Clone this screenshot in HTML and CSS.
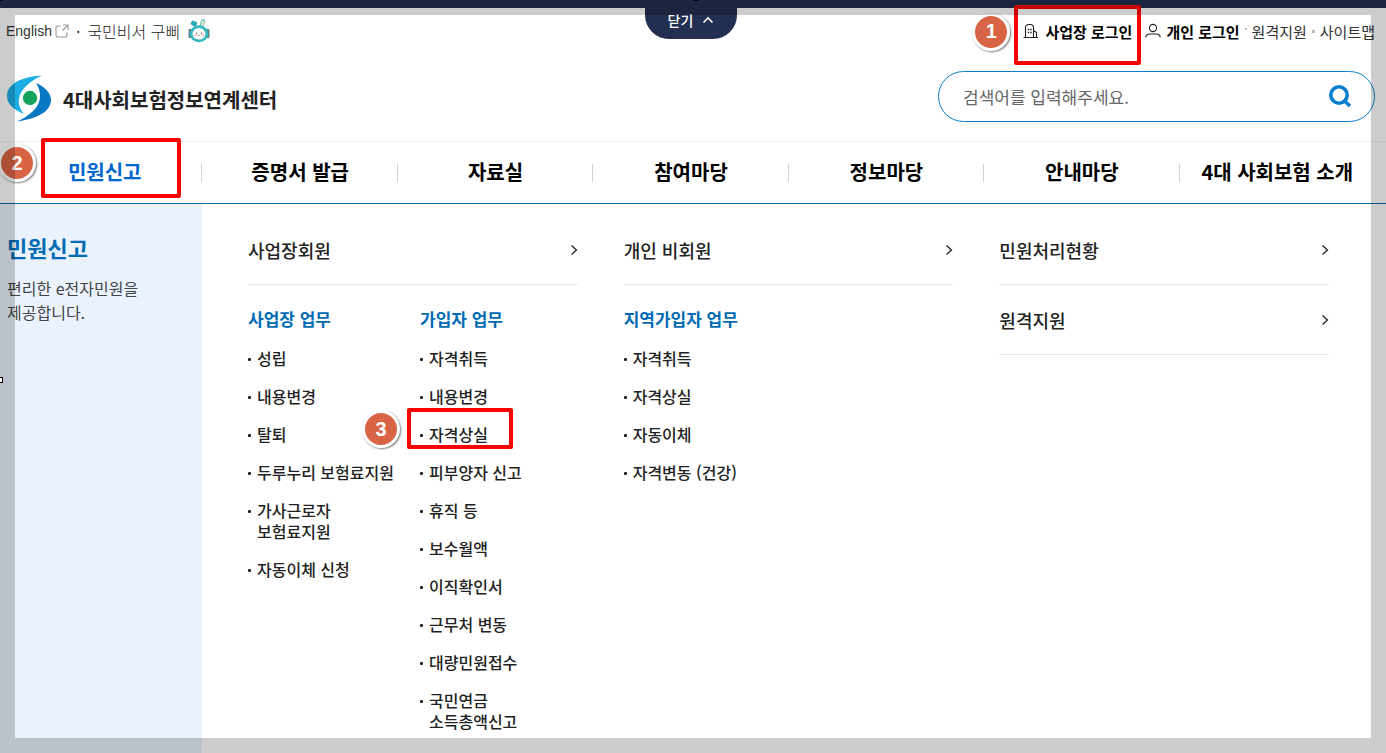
FILE: index.html
```html
<!DOCTYPE html>
<html lang="ko">
<head>
<meta charset="utf-8">
<meta name="viewport" content="width=device-width, initial-scale=1">
<title>4대사회보험정보연계센터</title>
<link rel="stylesheet" href="styles.css">
</head>
<body>
<div class="page">
  <div class="topbar">
    <button class="close-tab" type="button">닫기
      <svg width="12" height="8" viewBox="0 0 12 8" fill="none" stroke="#fff" stroke-width="1.600"><path d="M1.500 6.500 6 2l4.500 4.500"/></svg>
    </button>
  </div>

  <header class="header">
    <div class="utility">
      <div class="utility-group">
        <a class="english" href="#">English
          <svg width="14" height="14" viewBox="0 0 14 14" fill="none" stroke="#999" stroke-width="1.100"><path d="M5.500 2H3a2 2 0 0 0-2 2v7a2 2 0 0 0 2 2h7a2 2 0 0 0 2-2V8.500M8 1h5v5M13 1 7.500 6.500"/></svg>
        </a>
        <span class="dot">·</span>
        <a class="assistant" href="#">국민비서 구삐
          <svg width="22" height="24" viewBox="0 0 22 24">
            <ellipse cx="6" cy="4.500" rx="3.200" ry="2.500" fill="#27a9b1" transform="rotate(25 6 4.500)"/>
            <ellipse cx="14.500" cy="4" rx="2.300" ry="4" fill="#6ecbc3" transform="rotate(20 14.500 4)"/>
            <ellipse cx="14.500" cy="4.300" rx="1.200" ry="2.800" fill="#f4e9b5" transform="rotate(20 14.500 4.300)"/>
            <rect x="0.500" y="10" width="4" height="9" rx="1" fill="#5d8289"/>
            <rect x="17.500" y="10" width="4" height="9" rx="1" fill="#5d8289"/>
            <ellipse cx="11" cy="14.800" rx="9.300" ry="8.500" fill="#35b8bd"/>
            <ellipse cx="11" cy="14.800" rx="6.500" ry="5.800" fill="#fff"/>
            <circle cx="7" cy="16.300" r="1.300" fill="#f8c9c9"/><circle cx="15" cy="16.300" r="1.300" fill="#f8c9c9"/>
            <circle cx="8.500" cy="14.300" r="0.700" fill="#555"/><circle cx="13.500" cy="14.300" r="0.700" fill="#555"/>
            <path d="M9.500 16q.8 1 1.500 0 .7 1 1.500 0" fill="none" stroke="#777" stroke-width=".8"/>
          </svg>
        </a>
      </div>
      <div class="utility-group utility-right">
        <div class="marked login-mark">
          <a class="login" href="#">
            <svg width="16" height="16" viewBox="0 0 16 16" fill="none" stroke="#222" stroke-width="1.100"><path d="M.5 14.500h14.500M2.500 14.500V4.500a3 3 0 0 1 3-3h2a3 3 0 0 1 3 3v10M10.500 7.500l3 2v5"/><path d="M4.800 6.500h1.400M7.300 6.500h1.400M4.800 9.500h1.400M7.300 9.500h1.400" stroke-width="1.400"/></svg>
            사업장 로그인</a>
          <span class="frame frame-login"></span>
          <span class="badge badge-login">1</span>
        </div>
        <a class="login login-personal" href="#">
          <svg width="16" height="16" viewBox="0 0 16 16" fill="none" stroke="#222" stroke-width="1.100"><circle cx="8" cy="5" r="3.600"/><path d="M.8 14.500c0-2.300 2-3.500 4.200-3.500h6c2.200 0 4.200 1.200 4.200 3.500"/></svg>
          개인 로그인</a>
        <span class="square square-high"></span>
        <a href="#">원격지원</a>
        <span class="square"></span>
        <a href="#">사이트맵</a>
      </div>
    </div>
    <div class="brand-row">
      <a class="brand" href="#">
        <svg width="46" height="48" viewBox="0 0 46 48">
          <path d="M36 .5C23 1 1 6 1 21c0 9 8 14 17 18-9-11-8-26 18-38.500Z" fill="#1caee5"/>
          <path d="M30 8c9 4 15 10 15 17 0 12-15 19-34 21.500C28 39 41 26 30 8Z" fill="#0878c2"/>
          <circle cx="24" cy="23" r="7.200" fill="#17a35b"/>
        </svg>
        4대사회보험정보연계센터
      </a>
      <form class="search">
        <input type="text" aria-label="검색어" placeholder="검색어를 입력해주세요.">
        <button type="button" aria-label="검색">
          <svg width="24" height="24" viewBox="0 0 24 24" fill="none" stroke="#087fce" stroke-width="3.600"><circle cx="11" cy="11" r="8.200"/><path d="m16.500 17 5.500 5"/></svg>
        </button>
      </form>
    </div>
  </header>

  <nav class="nav">
    <div class="nav-item marked"><a class="active" href="#">민원신고</a><span class="frame frame-nav"></span><span class="badge badge-nav">2</span></div>
    <div class="nav-item"><a href="#">증명서 발급</a></div>
    <div class="nav-item"><a href="#">자료실</a></div>
    <div class="nav-item"><a href="#">참여마당</a></div>
    <div class="nav-item"><a href="#">정보마당</a></div>
    <div class="nav-item"><a href="#">안내마당</a></div>
    <div class="nav-item"><a href="#">4대 사회보험 소개</a></div>
  </nav>

  <main class="menu">
    <aside class="side">
      <h1>민원신고</h1>
      <p>편리한 e전자민원을<br>제공합니다.</p>
    </aside>
    <div class="columns">
      <section>
        <a class="head" href="#">사업장회원 <svg width="8" height="12" viewBox="0 0 8 12"><path d="m1.500 1.500 5 4.500-5 4.500"/></svg></a>
        <div class="lists">
          <div>
            <h2>사업장 업무</h2>
            <ul>
              <li><a href="#">성립</a></li>
              <li><a href="#">내용변경</a></li>
              <li><a href="#">탈퇴</a></li>
              <li><a href="#">두루누리 보험료지원</a></li>
              <li><a href="#">가사근로자<br>보험료지원</a></li>
              <li><a href="#">자동이체 신청</a></li>
            </ul>
          </div>
          <div>
            <h2>가입자 업무</h2>
            <ul>
              <li><a href="#">자격취득</a></li>
              <li><a href="#">내용변경</a></li>
              <li class="marked"><a href="#">자격상실</a><span class="frame frame-list"></span><span class="badge badge-list">3</span></li>
              <li><a href="#">피부양자 신고</a></li>
              <li><a href="#">휴직 등</a></li>
              <li><a href="#">보수월액</a></li>
              <li><a href="#">이직확인서</a></li>
              <li><a href="#">근무처 변동</a></li>
              <li><a href="#">대량민원접수</a></li>
              <li><a href="#">국민연금<br>소득총액신고</a></li>
            </ul>
          </div>
        </div>
      </section>
      <section>
        <a class="head" href="#">개인 비회원 <svg width="8" height="12" viewBox="0 0 8 12"><path d="m1.500 1.500 5 4.500-5 4.500"/></svg></a>
        <h2>지역가입자 업무</h2>
        <ul>
          <li><a href="#">자격취득</a></li>
          <li><a href="#">자격상실</a></li>
          <li><a href="#">자동이체</a></li>
          <li><a href="#">자격변동 (건강)</a></li>
        </ul>
      </section>
      <section>
        <a class="head" href="#">민원처리현황 <svg width="8" height="12" viewBox="0 0 8 12"><path d="m1.500 1.500 5 4.500-5 4.500"/></svg></a>
        <a class="head" href="#">원격지원 <svg width="8" height="12" viewBox="0 0 8 12"><path d="m1.500 1.500 5 4.500-5 4.500"/></svg></a>
      </section>
    </div>
  </main>
</div>
<div class="shade"></div>
<span class="handle handle-corner"></span>
<span class="handle handle-top"></span>
<span class="handle handle-left"></span>
</body>
</html>
```
FILE: styles.css
```css
* { box-sizing: border-box; }
body {
  margin: 0;
  background: #fff;
  color: #222;
  font-family: "Noto Sans CJK KR", "Noto Sans", sans-serif;
  font-size: 16px;
}
a { color: inherit; text-decoration: none; }
button { border: 0; padding: 0; background: none; font: inherit; cursor: pointer; }
h1, h2, p, ul { margin: 0; padding: 0; }
ul { list-style: none; }
svg { flex: none; }

.page { display: flex; flex-direction: column; min-height: 100vh; }

.topbar { position: relative; height: 8px; background: #222f50; }
.close-tab {
  position: absolute;
  top: 0;
  left: 50%;
  z-index: 2;
  display: flex;
  align-items: center;
  justify-content: center;
  gap: 9px;
  width: 92px;
  height: 39px;
  margin-left: -48px;
  border-radius: 0 0 24px 24px;
  background: #222f50;
  color: #fff;
  font-size: 14px;
  font-weight: 500;
}

.header { padding: 0 11px 18px 6px; }
.utility {
  display: flex;
  align-items: center;
  justify-content: space-between;
  height: 46px;
}
.utility-group, .english, .assistant, .login { display: flex; align-items: center; }
.english { gap: 3px; font-family: "Liberation Sans", sans-serif; font-size: 14px; color: #333; }
.dot { padding: 0 7px; color: #333; }
.assistant { gap: 8px; font-weight: 300; }
.utility-right { font-size: 15px; color: #333; }
.login { gap: 6px; color: #000; font-weight: 700; }
.login-personal { gap: 5px; margin-left: 13px; }
.square { width: 3px; height: 3px; margin: 0 5px; background: #bbb; }
.square-high { width: 2px; height: 2px; margin-bottom: 4px; }

.brand-row { display: flex; align-items: center; justify-content: space-between; padding-top: 15px; }
.brand {
  display: flex;
  align-items: center;
  gap: 11px;
  padding-top: 6px;
  color: #222;
  font-size: 20px;
  font-weight: 700;
}
.search {
  display: flex;
  align-items: center;
  width: 437px;
  height: 51px;
  padding: 0 22px 0 24px;
  border: 1px solid #087fce;
  border-radius: 26px;
}
.search input {
  flex: 1;
  min-width: 0;
  padding: 0;
  border: 0;
  outline: 0;
  background: transparent;
  font: inherit;
  font-size: 17px;
}
.search input::placeholder { color: #666; opacity: 1; }
.search button { display: flex; }

.nav {
  display: grid;
  grid-template-columns: repeat(7, 1fr);
  height: 63px;
  padding: 0 12px 0 6px;
  border-top: 1px solid #eee;
  border-bottom: 1px solid #0068ac;
}
.nav-item {
  display: flex;
  align-items: center;
  justify-content: center;
  padding: 0 0 2px 2px;
  color: #000;
  font-size: 20px;
  font-weight: 700;
}
.nav-item + .nav-item { background: linear-gradient(#c9d5da, #c9d5da) left center / 1px 18px no-repeat; }
.nav .active { color: #0065cc; }

.menu { flex: 1; display: grid; grid-template-columns: 202px 1fr; }
.side { padding: 26px 7px; background: #eaf3fd; }
.side h1 { color: #006bb3; font-size: 22px; line-height: 34px; font-weight: 700; }
.side p { margin-top: 12px; color: #444; line-height: 24px; }
.columns {
  display: grid;
  grid-template-columns: repeat(3, 1fr);
  gap: 46px;
  padding: 11px 57px 16px 46px;
}
.head {
  display: flex;
  align-items: center;
  justify-content: space-between;
  height: 70px;
  border-bottom: 1px solid #e8e8e8;
  font-size: 18px;
  line-height: 26px;
  font-weight: 500;
}
.head svg { fill: none; stroke: #222; stroke-width: 1.3; }
.lists { display: grid; grid-template-columns: 172px 1fr; }
.columns h2 {
  margin: 22px 0 17px;
  color: #006bb3;
  font-size: 17px;
  line-height: 24px;
  font-weight: 700;
}
.columns ul { display: grid; gap: 17px; }
.columns li {
  position: relative;
  padding-left: 9px;
  font-weight: 500;
  line-height: 21px;
  white-space: nowrap;
}
.columns li::before {
  content: "";
  position: absolute;
  top: 10px;
  left: 0;
  width: 3px;
  height: 3px;
  border-radius: 1px;
  background: #222;
}

.marked { position: relative; }
.frame { position: absolute; border: 4px solid #f00; border-radius: 2px; pointer-events: none; }
.frame-login { inset: -16px -9px -23px -9px; }
.frame-nav { top: -4px; left: 35px; width: 140px; height: 60px; }
.frame-list { top: -16px; left: -13px; width: 106px; height: 41px; }
.badge {
  position: absolute;
  display: flex;
  align-items: center;
  justify-content: center;
  width: 38px;
  height: 38px;
  border: 3px solid #fff;
  border-radius: 50%;
  background: #d96445;
  box-shadow: 1px 1px 2px #777;
  color: #fff;
  font-family: "Liberation Sans", sans-serif;
  font-size: 20px;
  font-weight: 700;
}
.badge-login { top: -8px; left: -51px; }
.badge-nav { top: 2px; left: -8px; }
.badge-list { top: -14px; left: -58px; }

.shade { position: fixed; inset: 0; z-index: 5; border: 15px solid rgba(0, 0, 0, 0.2); pointer-events: none; }
.handle { position: fixed; z-index: 6; background: #000; }
.handle-corner { top: 0; left: 0; width: 3px; height: 1px; }
.handle-top { top: 0; left: 50%; width: 6px; height: 1px; }
.handle-left { top: 50%; left: 0; width: 3px; height: 6px; border: 1px solid #000; border-left: 0; background: #fff; }
```
